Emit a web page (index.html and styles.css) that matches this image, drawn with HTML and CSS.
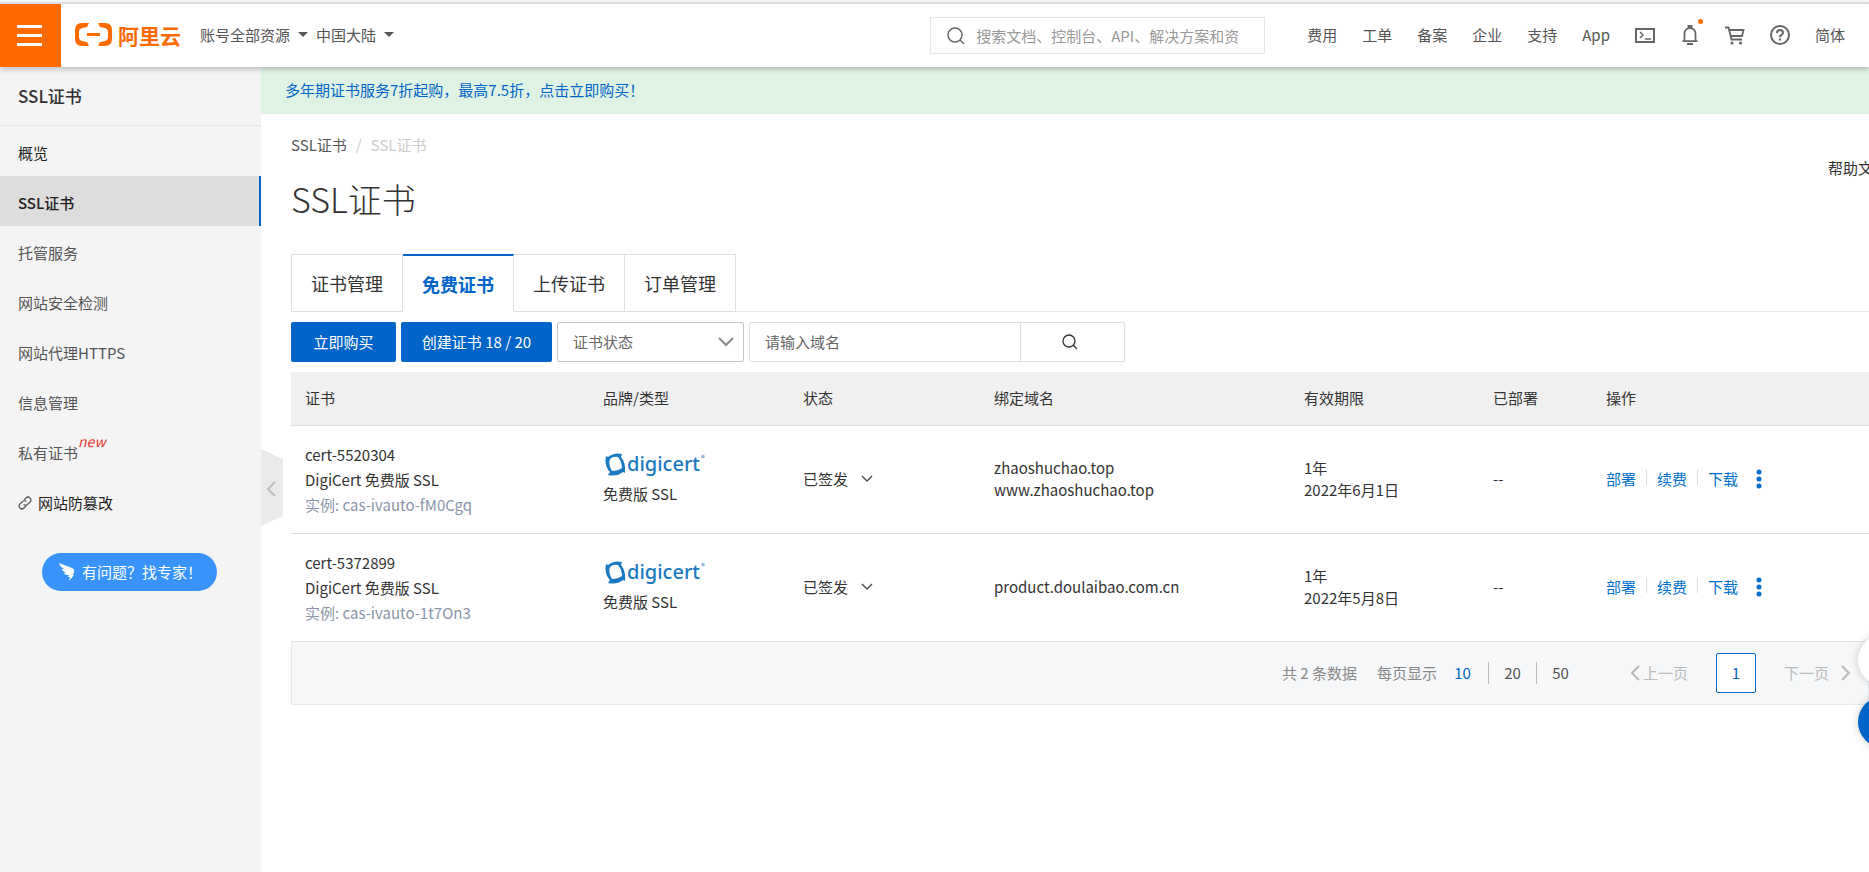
FILE: index.html
```html
<!DOCTYPE html>
<html lang="zh-CN">
<head>
  <meta charset="UTF-8" />
  <title>SSL证书</title>
  <link rel="stylesheet" href="styles.css">
</head>
<body>
  <header class="topbar">
    <button class="menu-btn" aria-label="菜单"><span></span><span></span><span></span></button>
    <a class="logo" href="#">
      <svg width="37" height="23" viewBox="0 0 37 23" fill="#ff6a00">
        <path d="M14 0H7Q0 0 0 7v9q0 7 7 7h7l-2-4-5-1q-3-1-3-4V9q0-3 3-4l5-1z" />
        <path d="M23 0h7q7 0 7 7v9q0 7-7 7h-7l2-4 5-1q3-1 3-4V9q0-3-3-4l-5-1z" />
        <rect x="12" y="10" width="13" height="3" />
      </svg>
      <span>阿里云</span>
    </a>
    <div class="scope">
      <button class="drop">账号全部资源<i class="caret"></i></button>
      <button class="drop">中国大陆<i class="caret"></i></button>
    </div>
    <label class="search">
      <svg width="18" height="18" viewBox="0 0 18 18" fill="none" stroke="#666" stroke-width="1.5">
        <circle cx="8" cy="8" r="7" /><path d="M13 13l4 4" />
      </svg>
      <input type="text" aria-label="搜索" placeholder="搜索文档、控制台、API、解决方案和资源" />
    </label>
    <nav class="topnav">
      <a href="#">费用</a>
      <a href="#">工单</a>
      <a href="#">备案</a>
      <a href="#">企业</a>
      <a href="#">支持</a>
      <a href="#">App</a>
      <a href="#" aria-label="命令行">
        <svg width="20" height="20" viewBox="0 0 20 20" fill="none" stroke="#666" stroke-width="2">
          <rect x="1" y="4" width="18" height="13" /><path d="M5 7l3 3-3 3M10 14h6" stroke-width="1.5" />
        </svg>
      </a>
      <a class="bell" href="#" aria-label="消息">
        <svg width="20" height="20" viewBox="0 0 20 20" fill="none" stroke="#666" stroke-width="1.8">
          <path d="M2.5 16.2h15M4.500 16V8.500a5.500 5.500 0 0 1 11 0V16M8.500 2.500V1h3v1.500M7 19h6" />
        </svg>
      </a>
      <a href="#" aria-label="购物车">
        <svg width="20" height="20" viewBox="0 0 20 20" fill="none" stroke="#666" stroke-width="1.8">
          <path d="M0 2.500h3.500l3 12H17M4 5h14.500l-1.500 6H6" />
          <g fill="#666" stroke="none"><circle cx="7" cy="18" r="1.600" /><circle cx="15.500" cy="18" r="1.600" /></g>
        </svg>
      </a>
      <a href="#" aria-label="帮助">
        <svg width="20" height="20" viewBox="0 0 20 20" fill="none" stroke="#666" stroke-width="2">
          <circle cx="10" cy="10" r="9" /><path d="M7 8q0-3 3-3t3 2.800q0 1.200-1.500 2T10 12.200M10 13.500v2" />
        </svg>
      </a>
      <a href="#">简体</a>
    </nav>
  </header>

  <div class="layout">
    <aside class="sidebar">
      <h2>SSL证书</h2>
      <nav class="side-nav">
        <a class="dark" href="#">概览</a>
        <a class="active" href="#">SSL证书</a>
        <a href="#">托管服务</a>
        <a href="#">网站安全检测</a>
        <a href="#">网站代理HTTPS</a>
        <a href="#">信息管理</a>
        <a href="#">私有证书<sup>new</sup></a>
        <a class="dark" href="#">
          <svg width="14" height="14" viewBox="0 0 14 14" fill="none" stroke="#555" stroke-width="1.2">
            <path d="M6 4l2-2q2-2 4 0t0 4L9.500 8.500q-2 1.500-4 0M8 10l-2 2q-2 2-4 0t0-4l2.500-2.500q2-1.500 4 0" />
          </svg>
          网站防篡改
        </a>
      </nav>
      <button class="expert">
        <svg width="16" height="18" viewBox="0 0 16 18" fill="#fff">
          <path d="M0 0l13 5q3 1 2 4l-1 3h1l-5 6 1-4H9l1-2q-4 0-5-2l2-.5Q3 8 3 6l2-.5Q1 4 0 0z" />
        </svg>
        有问题？找专家！
      </button>
    </aside>

    <main class="content">
      <button class="collapse" aria-label="收起">
        <svg width="22" height="77" viewBox="0 0 22 77">
          <path d="M0 0l22 10v57L0 77z" fill="#eaeaea" />
          <path d="M14 33l-7 7 7 7" fill="none" stroke="#bbb" stroke-width="2" />
        </svg>
      </button>
      <a class="banner" href="#">多年期证书服务7折起购，最高7.5折，点击立即购买！</a>
      <div class="page">
        <div class="page-head">
          <div>
            <div class="crumbs"><a href="#">SSL证书</a><span>/</span><span>SSL证书</span></div>
            <h1>SSL证书</h1>
          </div>
          <a class="help" href="#">帮助文档</a>
        </div>

        <div class="tabs">
          <button>证书管理</button>
          <button class="active">免费证书</button>
          <button>上传证书</button>
          <button>订单管理</button>
        </div>

        <div class="toolbar">
          <button class="primary buy">立即购买</button>
          <button class="primary create">创建证书 18 / 20</button>
          <div class="select">
            <select aria-label="证书状态"><option>证书状态</option></select>
            <svg width="16" height="10" viewBox="0 0 16 10" fill="none" stroke="#888" stroke-width="2"><path d="M1 1l7 7 7-7" /></svg>
          </div>
          <div class="domain">
            <input type="text" aria-label="域名" placeholder="请输入域名" />
            <button aria-label="搜索">
              <svg width="16" height="16" viewBox="0 0 16 16" fill="none" stroke="#333" stroke-width="1.3"><circle cx="7" cy="7" r="6" /><path d="M11 11l4 4" /></svg>
            </button>
          </div>
        </div>

        <table class="certs">
          <colgroup>
            <col class="c-cert"><col class="c-brand"><col class="c-state"><col class="c-domain"><col class="c-term"><col class="c-deploy"><col>
          </colgroup>
          <thead>
            <tr>
              <th>证书</th>
              <th>品牌/类型</th>
              <th>状态</th>
              <th>绑定域名</th>
              <th>有效期限</th>
              <th>已部署</th>
              <th>操作</th>
            </tr>
          </thead>
          <tbody>
            <tr>
              <td class="name">cert-5520304<br>DigiCert 免费版 SSL<br><span>实例: cas-ivauto-fM0Cgq</span></td>
              <td>
                <div class="brand">
                  <svg width="21" height="23" viewBox="0 0 21 23" fill="#1b7ac2"><path fill-rule="evenodd" d="M1 3l2 1Q9-1 17 1l-1 3q5 6 4 16l-2-1Q12 24 3 22l2-3Q-1 13 1 3zM5 6q-2 6 2 12 6 0 10-3 0-6-4-11-5-1-8 2z" /></svg>
                  <span>digicert</span><sup>®</sup>
                </div>
                免费版 SSL
              </td>
              <td><span class="state">已签发<svg width="12" height="8" viewBox="0 0 12 8" fill="none" stroke="#444" stroke-width="1.3"><path d="M1 1l5 5 5-5" /></svg></span></td>
              <td>zhaoshuchao.top<br>www.zhaoshuchao.top</td>
              <td>1年<br>2022年6月1日</td>
              <td>--</td>
              <td>
                <div class="actions">
                  <a href="#">部署</a><a href="#">续费</a><a href="#">下载</a>
                  <button aria-label="更多"><svg width="6" height="20" viewBox="0 0 6 20" fill="#0070cc"><circle cx="3" cy="3" r="2.5" /><circle cx="3" cy="10" r="2.5" /><circle cx="3" cy="17" r="2.5" /></svg></button>
                </div>
              </td>
            </tr>
            <tr>
              <td class="name">cert-5372899<br>DigiCert 免费版 SSL<br><span>实例: cas-ivauto-1t7On3</span></td>
              <td>
                <div class="brand">
                  <svg width="21" height="23" viewBox="0 0 21 23" fill="#1b7ac2"><path fill-rule="evenodd" d="M1 3l2 1Q9-1 17 1l-1 3q5 6 4 16l-2-1Q12 24 3 22l2-3Q-1 13 1 3zM5 6q-2 6 2 12 6 0 10-3 0-6-4-11-5-1-8 2z" /></svg>
                  <span>digicert</span><sup>®</sup>
                </div>
                免费版 SSL
              </td>
              <td><span class="state">已签发<svg width="12" height="8" viewBox="0 0 12 8" fill="none" stroke="#444" stroke-width="1.3"><path d="M1 1l5 5 5-5" /></svg></span></td>
              <td>product.doulaibao.com.cn</td>
              <td>1年<br>2022年5月8日</td>
              <td>--</td>
              <td>
                <div class="actions">
                  <a href="#">部署</a><a href="#">续费</a><a href="#">下载</a>
                  <button aria-label="更多"><svg width="6" height="20" viewBox="0 0 6 20" fill="#0070cc"><circle cx="3" cy="3" r="2.5" /><circle cx="3" cy="10" r="2.5" /><circle cx="3" cy="17" r="2.5" /></svg></button>
                </div>
              </td>
            </tr>
          </tbody>
        </table>

        <div class="pager">
          <span>共 2 条数据</span>
          <span class="per">每页显示</span>
          <div class="sizes">
            <a class="on" href="#">10</a><a href="#">20</a><a href="#">50</a>
          </div>
          <button class="step" disabled><svg width="10" height="16" viewBox="0 0 10 16" fill="none" stroke="#bbb" stroke-width="2"><path d="M9 1L2 8l7 7" /></svg>上一页</button>
          <button class="current">1</button>
          <button class="step next" disabled>下一页<svg width="10" height="16" viewBox="0 0 10 16" fill="none" stroke="#bbb" stroke-width="2"><path d="M1 1l7 7-7 7" /></svg></button>
        </div>
      </div>
    </main>
  </div>

  <div class="floats">
    <button aria-label="反馈"></button>
    <button class="blue" aria-label="客服"></button>
  </div>
</body>
</html>
```
FILE: styles.css
```css
* {
  box-sizing: border-box;
}

body {
  margin: 0;
  padding-top: 2px;
  min-height: 100vh;
  display: flex;
  flex-direction: column;
  overflow: hidden;
  font-family: "Noto Sans CJK SC", sans-serif;
  font-size: 15px;
  line-height: 22px;
  color: #333;
  background: #fff;
}

a {
  color: inherit;
  text-decoration: none;
}

button, input, select {
  font: inherit;
  color: inherit;
  background: none;
  border: none;
  padding: 0;
  margin: 0;
  outline: none;
}

button {
  cursor: pointer;
}

svg {
  display: block;
  flex: none;
}

/* Top bar */
.topbar {
  position: relative;
  z-index: 2;
  display: flex;
  align-items: center;
  height: 65px;
  padding-right: 24px;
  border-top: 2px solid #dcdce4;
  background: #fff;
  box-shadow: 0 2px 6px rgba(0, 0, 0, 0.25);
  color: #555;
  white-space: nowrap;
}

.menu-btn {
  width: 61px;
  height: 63px;
  padding: 0 19px 0 17px;
  display: flex;
  flex-direction: column;
  justify-content: center;
  gap: 6px;
  background: #ff6a00;
}

.menu-btn span {
  height: 3px;
  background: #fff;
}

.logo {
  display: flex;
  align-items: center;
  gap: 6px;
  margin-left: 14px;
  padding-bottom: 2px;
  font-size: 21px;
  font-weight: bold;
  color: #ff6a00;
}

.scope {
  display: flex;
  gap: 8px;
  margin-left: 19px;
  padding-bottom: 2px;
}

.drop {
  display: flex;
  align-items: center;
  gap: 8px;
}

.caret {
  border: 5px solid transparent;
  border-top-color: #555;
  border-bottom: none;
}

.search {
  display: flex;
  align-items: center;
  gap: 11px;
  width: 335px;
  height: 37px;
  margin: 0 42px 0 auto;
  padding: 0 26px 0 16px;
  border: 1px solid #e5e5e5;
}

.search input {
  flex: 1;
  min-width: 0;
}

.search input::placeholder {
  color: #999;
}

.topnav {
  display: flex;
  align-items: center;
  gap: 25px;
  padding-bottom: 2px;
}

.bell {
  position: relative;
}

.bell::after {
  content: "";
  position: absolute;
  top: -6px;
  right: -3px;
  width: 5px;
  height: 5px;
  border-radius: 50%;
  background: #ff6a00;
}

/* Sidebar */
.layout {
  flex: 1;
  display: flex;
}

.sidebar {
  flex: none;
  width: 261px;
  background: #f4f4f4;
}

.sidebar h2 {
  margin: 0;
  height: 59px;
  padding-left: 18px;
  border-bottom: 1px solid #e5e5e5;
  font-size: 17px;
  font-weight: 500;
  line-height: 58px;
}

.side-nav a {
  display: flex;
  align-items: center;
  gap: 6px;
  height: 50px;
  padding: 4px 0 0 18px;
  color: #555;
}

.side-nav a.dark {
  color: #222;
}

.side-nav a.active {
  background: #ddd;
  border-right: 2px solid #0064c8;
  color: #222;
  font-weight: 500;
}

.side-nav sup {
  align-self: flex-start;
  margin-left: -6px;
  color: #e03c31;
  font-size: 14px;
  font-style: italic;
}

.expert {
  display: flex;
  align-items: center;
  gap: 7px;
  height: 38px;
  width: 175px;
  margin: 27px 0 0 42px;
  padding-left: 17px;
  border-radius: 19px;
  background: #3894fa;
  color: #fff;
  white-space: nowrap;
}

/* Content */
.content {
  position: relative;
  flex: 1;
  min-width: 0;
}

.collapse {
  position: absolute;
  left: 0;
  top: 382px;
}

.banner {
  display: block;
  height: 47px;
  padding-left: 24px;
  background: #dff3e4;
  color: #0064c8;
  line-height: 46px;
}

.page {
  padding-left: 30px;
}

.page-head {
  display: flex;
  justify-content: space-between;
}

.crumbs {
  display: flex;
  gap: 9px;
  padding-top: 20px;
  color: #555;
}

.crumbs span {
  color: #ccc;
}

h1 {
  margin: 21px 0 33px;
  font-size: 34px;
  font-weight: 300;
  line-height: 44px;
}

.help {
  width: 41px;
  margin-top: 43px;
  white-space: nowrap;
}

.tabs {
  display: flex;
  border-bottom: 1px solid #e5e5e5;
}

.tabs button {
  width: 111px;
  height: 58px;
  margin-bottom: -1px;
  border: 1px solid #e0e0e0;
  border-left: none;
  font-size: 18px;
}

.tabs button:first-child {
  width: 112px;
  border-left: 1px solid #e0e0e0;
}

.tabs button.active {
  border-top: 2px solid #0064c8;
  border-bottom-color: #fff;
  color: #0064c8;
  font-weight: bold;
}

.toolbar {
  display: flex;
  gap: 5px;
  margin: 10px 0;
}

.toolbar .primary {
  height: 40px;
  border-radius: 2px;
  background: #0064c8;
  color: #fff;
}

.toolbar .buy {
  width: 105px;
}

.toolbar .create {
  width: 151px;
}

.select {
  position: relative;
  width: 187px;
}

.select select {
  width: 100%;
  height: 40px;
  padding-left: 15px;
  border: 1px solid #c0c6cc;
  border-radius: 2px;
  color: #666;
  appearance: none;
}

.select svg {
  position: absolute;
  right: 10px;
  top: 15px;
  pointer-events: none;
}

.domain {
  display: flex;
  width: 376px;
  border: 1px solid #e0e0e0;
  border-radius: 2px;
}

.domain input {
  flex: 1;
  min-width: 0;
  padding-left: 15px;
}

.domain input::placeholder {
  color: #666;
}

.domain button {
  width: 104px;
  padding-right: 5px;
  display: flex;
  align-items: center;
  justify-content: center;
  border-left: 1px solid #e0e0e0;
}

/* Table */
.certs {
  width: 100%;
  table-layout: fixed;
  border-collapse: collapse;
}

.c-cert { width: 298px; }
.c-brand { width: 200px; }
.c-state { width: 191px; }
.c-domain { width: 310px; }
.c-term { width: 189px; }
.c-deploy { width: 113px; }

.certs th, .certs td {
  padding: 0 0 0 14px;
  border-bottom: 1px solid #e0e0e0;
  text-align: left;
  font-weight: normal;
}

.certs th {
  height: 53px;
  background: #f0f0f0;
}

.certs td {
  height: 108px;
}

.certs td.name {
  line-height: 25px;
}

.name span {
  color: #8a96a8;
}

.brand {
  display: flex;
  align-items: center;
  gap: 1px;
  height: 30px;
  margin-left: 2px;
  padding-bottom: 8px;
  color: #1b7ac2;
}

.brand span {
  font-family: "Noto Sans", sans-serif;
  font-size: 20px;
  font-weight: 500;
}

.brand sup {
  align-self: flex-start;
  font-size: 8px;
  line-height: 10px;
}

.state {
  display: flex;
  align-items: center;
  gap: 13px;
}

.actions {
  display: flex;
  align-items: center;
  color: #0070cc;
}

.actions a + a::before {
  content: "";
  display: inline-block;
  width: 1px;
  height: 16px;
  margin: 0 10px;
  background: #ddd;
}

.actions button {
  margin-left: 18px;
}

/* Pagination */
.pager {
  display: flex;
  align-items: center;
  justify-content: flex-end;
  height: 63px;
  padding-right: 17px;
  border: 1px solid #e5e8ec;
  border-top: none;
  background: #f6f7f9;
  color: #888;
}

.per {
  margin-left: 20px;
}

.sizes {
  display: flex;
  margin-right: 46px;
  color: #555;
}

.sizes a {
  width: 48px;
  text-align: center;
}

.sizes a:first-child {
  width: 51px;
}

.sizes a + a {
  border-left: 1px solid #bbb;
}

.sizes .on {
  color: #0064c8;
}

.step {
  display: flex;
  align-items: center;
  gap: 3px;
  color: #bbb;
}

.step.next {
  gap: 12px;
}

.current {
  width: 40px;
  height: 40px;
  margin: 0 28px;
  border: 1px solid #0064c8;
  border-radius: 2px;
  background: #fff;
  color: #0064c8;
}

/* Floating buttons on the window edge */
.floats {
  position: fixed;
  z-index: 3;
  right: -41px;
  top: 634px;
  display: flex;
  flex-direction: column;
  gap: 10px;
}

.floats button {
  width: 52px;
  height: 52px;
  border-radius: 50%;
  background: #fff;
  box-shadow: 0 0 8px rgba(0, 0, 0, 0.2);
}

.floats .blue {
  background: #0064c8;
}
```
